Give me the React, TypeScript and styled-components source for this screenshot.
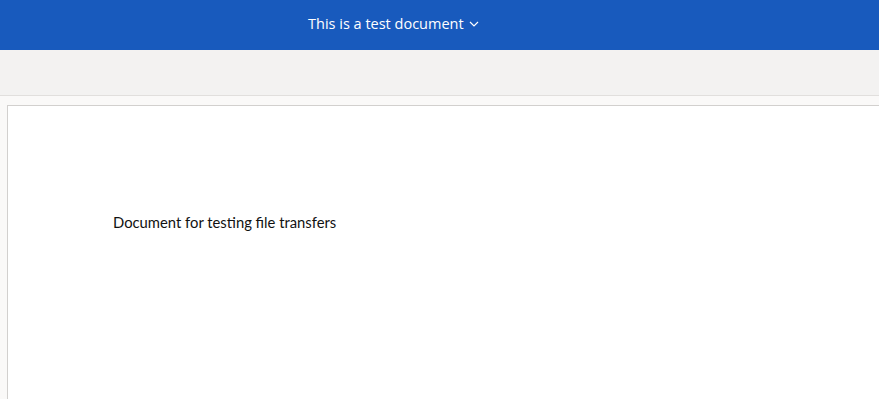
import React from "react";
import styled, { createGlobalStyle } from "styled-components";

const GlobalStyle = createGlobalStyle`
  html, body {
    margin: 0;
    padding: 0;
    background: #faf9f8;
    overflow: hidden;
  }
`;

const Shell = styled.div`
  width: 879px;
  height: 399px;
  display: flex;
  flex-direction: column;
  background: #faf9f8;
  overflow: hidden;
`;

const TitleBar = styled.header`
  height: 50px;
  flex: none;
  background: #185abd;
  display: flex;
  align-items: center;
  padding: 0 0 3px 308px;
  box-sizing: border-box;
`;

const TitleButton = styled.button`
  display: flex;
  align-items: center;
  gap: 5px;
  padding: 0;
  border: 0;
  background: transparent;
  color: #ffffff;
  font-family: "Open Sans", "Noto Sans", sans-serif;
  font-size: 14.5px;
  cursor: pointer;
`;

const Ribbon = styled.div`
  height: 45px;
  flex: none;
  background: #f3f2f1;
  border-bottom: 1px solid #e1dfdd;
`;

const Canvas = styled.main`
  flex: 1;
  padding: 9px 0 0 7px;
  background: #faf9f8;
`;

const Page = styled.div`
  height: 100%;
  background: #ffffff;
  border: 1px solid #d2d0ce;
  border-right: 0;
  border-bottom: 0;
  box-sizing: border-box;
  padding: 107px 0 0 105px;
`;

const Paragraph = styled.p`
  margin: 0;
  color: #111111;
  font-family: "Lato", "Noto Sans", sans-serif;
  font-size: 14.8px;
`;

const Chevron = () => (
  <svg width="10" height="6" viewBox="0 0 10 6" fill="none">
    <path d="M1 1l4 4 4-4" stroke="#ffffff" strokeWidth="1.2" />
  </svg>
);

export default function App() {
  return (
    <>
      <GlobalStyle />
      <Shell>
        <TitleBar>
          <TitleButton>
            This is a test document
            <Chevron />
          </TitleButton>
        </TitleBar>
        <Ribbon />
        <Canvas>
          <Page>
            <Paragraph>Document for testing file transfers</Paragraph>
          </Page>
        </Canvas>
      </Shell>
    </>
  );
}
